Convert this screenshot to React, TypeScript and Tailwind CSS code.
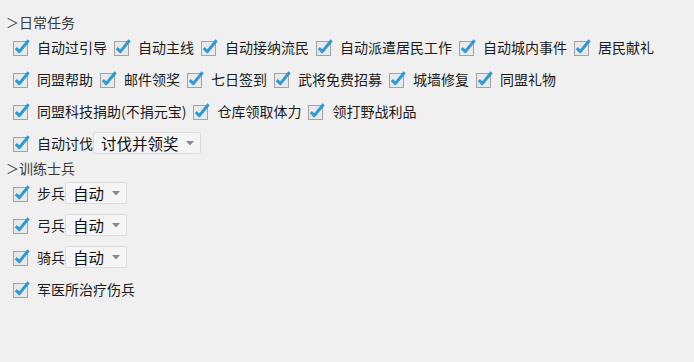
import React from 'react';

const font = { fontFamily: '"Noto Sans CJK SC", "Noto Sans", sans-serif' };

function Check() {
  return (
    <svg width="17" height="18" viewBox="0 0 17 18" className="shrink-0">
      <rect x="0.5" y="3.5" width="14" height="14" fill="#e9e9e9" stroke="#a3a3a3" />
      <path d="M2.8 10.2 L6.3 13.6 L15.6 2.2" fill="none" stroke="#2b9bd6" strokeWidth="3" strokeLinejoin="round" />
    </svg>
  );
}

function Item({ label }: { label: string }) {
  return (
    <div className="flex items-center mr-[7px]">
      <Check />
      <span className="ml-[7px] text-[14px] leading-[18px] text-[#1a1a1a]">{label}</span>
    </div>
  );
}

function Combo({ value, width }: { value: string; width: string }) {
  return (
    <div className={`flex items-center justify-between h-[22px] ${width} pl-[7px] pr-[6px] bg-[#f5f5f5] border border-[#dcdcdc] rounded-[2px]`}>
      <span className="text-[15.5px] leading-[20px] text-[#111]">{value}</span>
      <svg width="8" height="5" viewBox="0 0 8 5">
        <path d="M0 0 L8 0 L4 4.5 Z" fill="#8a8a8a" />
      </svg>
    </div>
  );
}

function Header({ label }: { label: string }) {
  return (
    <div className="h-[18px] flex items-center text-[14px] leading-[18px] text-[#3a3a3a]">
      <span className="text-[13px] w-[13px]">＞</span>
      <span>{label}</span>
    </div>
  );
}

function Row({ children }: { children: React.ReactNode }) {
  return <div className="h-[32px] flex items-center pl-[7px]">{children}</div>;
}

export default function App() {
  const row1 = ['自动过引导', '自动主线', '自动接纳流民', '自动派遣居民工作', '自动城内事件', '居民献礼'];
  const row2 = ['同盟帮助', '邮件领奖', '七日签到', '武将免费招募', '城墙修复', '同盟礼物'];
  const row3 = ['同盟科技捐助(不捐元宝)', '仓库领取体力', '领打野战利品'];
  const troops = ['步兵', '弓兵', '骑兵'];

  return (
    <div className="w-[694px] h-[362px] bg-[#f0f0f0] pt-[13px] pl-[6px]" style={font}>
      <Header label="日常任务" />
      <Row>{row1.map((t) => <Item key={t} label={t} />)}</Row>
      <Row>{row2.map((t) => <Item key={t} label={t} />)}</Row>
      <Row>{row3.map((t) => <Item key={t} label={t} />)}</Row>
      <Row>
        <div className="flex items-center">
          <Check />
          <span className="ml-[7px] text-[14px] leading-[18px] text-[#1a1a1a]">自动讨伐</span>
        </div>
        <Combo value="讨伐并领奖" width="w-[108px]" />
      </Row>
      <Header label="训练士兵" />
      {troops.map((t) => (
        <Row key={t}>
          <div className="flex items-center">
            <Check />
            <span className="ml-[7px] text-[14px] leading-[18px] text-[#1a1a1a]">{t}</span>
          </div>
          <Combo value="自动" width="w-[62px]" />
        </Row>
      ))}
      <Row>
        <Item label="军医所治疗伤兵" />
      </Row>
    </div>
  );
}
